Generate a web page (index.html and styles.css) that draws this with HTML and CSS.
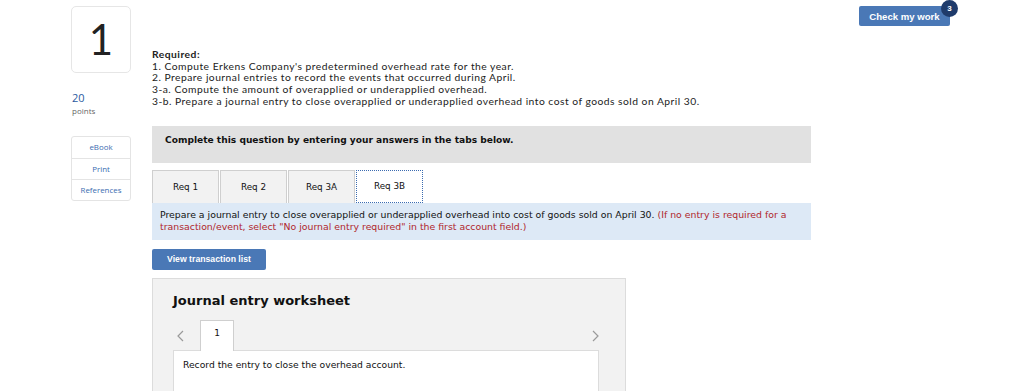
FILE: index.html
```html
<!DOCTYPE html>
<html lang="en">
<head>
  <meta charset="UTF-8">
  <title>Question 1</title>
  <link rel="stylesheet" href="styles.css">
</head>
<body>
  <div class="page">
    <!-- Left column: number, points, tools -->
    <aside class="side">
      <div class="qnum">1</div>
      <div class="points">
        <span class="points-value">20</span>
        <span class="points-label">points</span>
      </div>
      <ul class="tools">
        <li><a href="#">eBook</a></li>
        <li><a href="#">Print</a></li>
        <li><a href="#">References</a></li>
      </ul>
    </aside>

    <!-- Question body -->
    <main class="main">
      <div class="required">
        <strong>Required:</strong>
        <p>1. Compute Erkens Company's predetermined overhead rate for the year.</p>
        <p>2. Prepare journal entries to record the events that occurred during April.</p>
        <p>3-a. Compute the amount of overapplied or underapplied overhead.</p>
        <p>3-b. Prepare a journal entry to close overapplied or underapplied overhead into cost of goods sold on April 30.</p>
      </div>

      <div class="notice">Complete this question by entering your answers in the tabs below.</div>

      <div class="tabs">
        <button class="tab">Req 1</button>
        <button class="tab">Req 2</button>
        <button class="tab">Req 3A</button>
        <button class="tab active">Req 3B</button>
      </div>

      <div class="info">
        Prepare a journal entry to close overapplied or underapplied overhead into cost of goods sold on April 30.
        <span class="hint">(If no entry is required for a transaction/event, select "No journal entry required" in the first account field.)</span>
      </div>

      <button class="btn-list">View transaction list</button>

      <section class="worksheet">
        <h2>Journal entry worksheet</h2>
        <div class="ws-nav">
          <svg class="arrow" width="7" height="12" viewBox="0 0 7 12"><path d="M6 1 1 6l5 5" fill="none" stroke="#9a9a9a" stroke-width="1.2"/></svg>
          <span class="ws-tab">1</span>
          <svg class="arrow next" width="7" height="12" viewBox="0 0 7 12"><path d="M1 1l5 5-5 5" fill="none" stroke="#9a9a9a" stroke-width="1.2"/></svg>
        </div>
        <div class="ws-body">Record the entry to close the overhead account.</div>
      </section>
    </main>

    <!-- Top right action -->
    <div class="actions">
      <button class="btn-check">Check my work</button>
      <span class="badge">3</span>
    </div>
  </div>
</body>
</html>
```

FILE: styles.css
```css
* {
  margin: 0;
  padding: 0;
  box-sizing: border-box;
}

body {
  font-family: Lato, 'Open Sans', sans-serif;
  color: #222;
  background: #fff;
  height: 391px;
  overflow: hidden;
}

.page {
  display: flex;
  align-items: flex-start;
  padding: 6px 0 0 71px;
}

/* Left column */
.side {
  width: 60px;
  flex: none;
}

.qnum {
  height: 67px;
  border: 1px solid #e6e6e6;
  border-radius: 5px;
  font-size: 42px;
  line-height: 65px;
  text-align: center;
  color: #222;
}

.points {
  display: flex;
  flex-direction: column;
  margin-top: 18px;
  padding-left: 1px;
  font-family: 'Open Sans', sans-serif;
}

.points-value {
  font-size: 11px;
  line-height: 14px;
  color: #2b5aa0;
}

.points-label {
  font-size: 8px;
  line-height: 11px;
  color: #666;
}

.tools {
  list-style: none;
  margin-top: 20px;
  border: 1px solid #e4e4e4;
  border-radius: 3px;
  text-align: center;
  font-family: 'Open Sans', sans-serif;
}

.tools li {
  height: 21px;
  line-height: 20px;
  border-top: 1px solid #e4e4e4;
  font-size: 7.9px;
}

.tools li:first-child {
  border-top: none;
}

.tools a {
  color: #3a6cb0;
  text-decoration: none;
}

/* Main column */
.main {
  width: 659px;
  margin-left: 21px;
  flex: none;
  padding-top: 43px;
}

.required {
  font-size: 10.3px;
  line-height: 11.7px;
  letter-spacing: 0.48px;
  color: #222;
}

.required strong {
  display: block;
  font-weight: bold;
}

.notice {
  margin-top: 18px;
  height: 37px;
  background: #e1e1e1;
  padding: 9px 13px;
  font-family: 'DejaVu Sans', Verdana, sans-serif;
  font-weight: bold;
  font-size: 9.1px;
  color: #111;
}

.tabs {
  display: flex;
  margin-top: 7px;
  gap: 1px;
}

.tab {
  width: 67px;
  height: 33px;
  background: #f2f2f2;
  border: 1px solid #cfcfcf;
  border-bottom: none;
  font-family: 'DejaVu Sans', Verdana, sans-serif;
  font-size: 8.8px;
  color: #111;
}

.tab.active {
  background: #fff;
  border: 1px dotted #3b6bb0;
}

.info {
  background: #dde9f6;
  padding: 6px 8px 7px 8px;
  height: 37px;
  font-family: 'DejaVu Sans', Verdana, sans-serif;
  font-size: 9.35px;
  line-height: 12px;
  color: #111;
}

.hint {
  color: #b0262c;
}

.btn-list {
  display: block;
  margin-top: 9px;
  width: 114px;
  height: 21px;
  border: none;
  border-radius: 2px;
  background: #4a78b6;
  color: #fff;
  font-family: 'Liberation Sans', Arial, sans-serif;
  font-weight: bold;
  font-size: 8.7px;
}

.worksheet {
  margin-top: 8px;
  width: 474px;
  height: 130px;
  background: #f2f2f2;
  border: 1px solid #dcdcdc;
  padding: 13px 26px 0 20px;
}

.worksheet h2 {
  font-family: 'DejaVu Sans', Verdana, sans-serif;
  font-size: 13px;
  line-height: 17px;
  color: #111;
}

.ws-nav {
  display: flex;
  align-items: flex-end;
  margin-top: 10px;
  height: 31px;
}

.arrow {
  align-self: center;
  margin: 3px 16px 0 4px;
}

.arrow.next {
  margin: 3px 0 0 auto;
}

.ws-tab {
  width: 34px;
  height: 31px;
  margin-bottom: -1px;
  background: #fff;
  border: 1px solid #cfcfcf;
  border-bottom: none;
  text-align: center;
  padding-top: 7px;
  font-family: 'DejaVu Sans', Verdana, sans-serif;
  font-size: 9px;
  color: #111;
  position: relative;
  z-index: 1;
}

.ws-body {
  background: #fff;
  border: 1px solid #dcdcdc;
  height: 60px;
  padding: 8px 9px;
  font-family: 'DejaVu Sans', Verdana, sans-serif;
  font-size: 9.2px;
  color: #111;
}

/* Top right */
.actions {
  position: relative;
  margin-left: 48px;
}

.btn-check {
  display: block;
  width: 91px;
  height: 20px;
  border: none;
  border-radius: 2px;
  background: #4a78b6;
  color: #fff;
  font-family: 'Liberation Sans', Arial, sans-serif;
  font-weight: bold;
  font-size: 9.6px;
}

.badge {
  position: absolute;
  top: -6px;
  right: -8px;
  width: 17px;
  height: 17px;
  border-radius: 50%;
  background: #1f3b6b;
  color: #fff;
  font-family: 'Liberation Sans', Arial, sans-serif;
  font-weight: bold;
  font-size: 8px;
  line-height: 17px;
  text-align: center;
}
```
